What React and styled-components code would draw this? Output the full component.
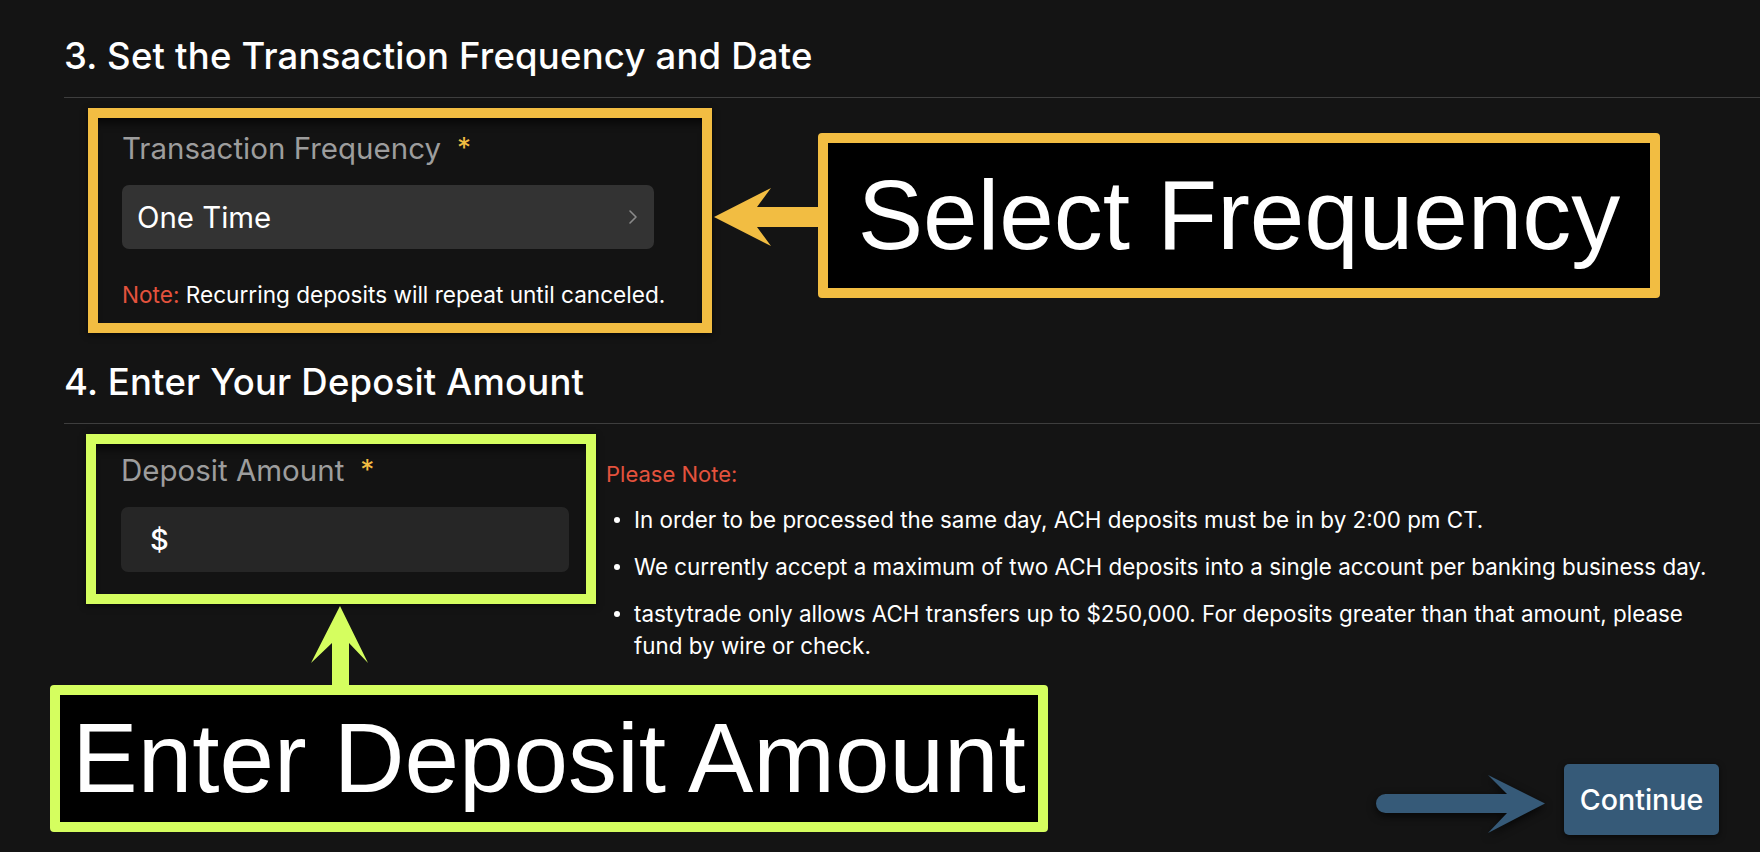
import React from "react";
import styled, { createGlobalStyle } from "styled-components";

const GlobalStyle = createGlobalStyle`
  html, body {
    margin: 0;
    padding: 0;
    background: #141414;
  }
  * {
    box-sizing: border-box;
  }
`;

const Page = styled.div`
  position: relative;
  width: 1760px;
  height: 852px;
  overflow: hidden;
  background: #141414;
  color: #ffffff;
  font-family: Inter, "Open Sans", sans-serif;
  padding: 34px 41px 0 64px;
`;

const Heading = styled.h2`
  margin: ${(p) => p.$top || 0}px 0 0 0;
  font-size: 36.5px;
  line-height: 44px;
  font-weight: 500;
  color: #ffffff;
  letter-spacing: 0.2px;
`;

const Divider = styled.hr`
  margin: 19px -41px 10px 0;
  border: 0;
  height: 1px;
  background: #3e3e3e;
`;

const Highlight = styled.div`
  margin-left: ${(p) => p.$left}px;
  width: ${(p) => p.$width}px;
  border: 10px solid ${(p) => p.$color};
  background: #131313;
  box-shadow: inset 0 10px 10px -6px rgba(0, 0, 0, 0.75),
    0 2px 6px rgba(0, 0, 0, 0.6);
  padding: ${(p) => p.$pad};
  flex-shrink: 0;
`;

const Label = styled.div`
  font-size: 29.5px;
  line-height: 36px;
  color: #9d9d9d;
  display: flex;
  align-items: flex-start;
  gap: 16px;
`;

const Star = styled.span`
  color: #f2bd42;
  font-size: 28px;
  line-height: 36px;
`;

const Select = styled.div`
  margin-top: 19px;
  width: 532px;
  height: 64px;
  border-radius: 7px;
  background: #333333;
  display: flex;
  align-items: center;
  justify-content: space-between;
  padding: 0 16px 0 15px;
  font-size: 29.4px;
  color: #ffffff;
`;

const AmountInput = styled.div`
  margin-top: 19px;
  width: 448px;
  height: 65px;
  border-radius: 7px;
  background: #262626;
  display: flex;
  align-items: center;
  padding-left: 29px;
  font-size: 29px;
  font-weight: 500;
  color: #ffffff;
`;

const Note = styled.div`
  margin-top: 31px;
  font-size: 22.6px;
  line-height: 30px;
  color: #ffffff;
  white-space: nowrap;
`;

const Red = styled.span`
  color: #e4523d;
`;

const AmountRow = styled.div`
  display: flex;
  align-items: flex-start;
`;

const Notes = styled.div`
  margin-left: 10px;
  padding-top: 25px;
  flex: 1;
`;

const NoteTitle = styled.div`
  font-size: 22px;
  line-height: 30px;
  color: #e4523d;
`;

const Bullets = styled.ul`
  list-style: none;
  margin: 0;
  padding: 0;
`;

const Bullet = styled.li`
  position: relative;
  margin-top: 15px;
  padding-left: 28px;
  font-size: 22.4px;
  line-height: 32px;
  color: #ffffff;

  &::before {
    content: "";
    position: absolute;
    left: 8px;
    top: 13px;
    width: 6px;
    height: 6px;
    border-radius: 50%;
    background: #ffffff;
  }
`;

const Footer = styled.div`
  margin-top: 102px;
  display: flex;
  justify-content: flex-end;
`;

const ContinueButton = styled.button`
  width: 155px;
  height: 71px;
  border: 0;
  border-radius: 5px;
  background: #365a78;
  color: #ffffff;
  font-family: Inter, "Open Sans", sans-serif;
  font-size: 28.6px;
  font-weight: 500;
  box-shadow: 0 2px 6px rgba(0, 0, 0, 0.6);
`;

const Callout = styled.div`
  position: absolute;
  left: ${(p) => p.$x}px;
  top: ${(p) => p.$y}px;
  width: ${(p) => p.$w}px;
  height: ${(p) => p.$h}px;
  border: 10px solid ${(p) => p.$color};
  border-radius: 4px;
  background: #000000;
  display: flex;
  align-items: center;
  justify-content: center;
  font-family: "Liberation Sans", Arial, sans-serif;
  font-size: 98px;
  color: #ffffff;
  white-space: nowrap;
`;

const ArrowSvg = styled.svg`
  position: absolute;
  left: ${(p) => p.$x}px;
  top: ${(p) => p.$y}px;
  overflow: visible;
`;

function Chevron() {
  return (
    <svg width="10" height="16" viewBox="0 0 10 16">
      <polyline
        points="2,2 8,8 2,14"
        fill="none"
        stroke="#8a8a8a"
        strokeWidth="1.6"
        strokeLinecap="round"
        strokeLinejoin="round"
      />
    </svg>
  );
}

export default function App() {
  return (
    <>
      <GlobalStyle />
      <Page>
        <Heading>3. Set the Transaction Frequency and Date</Heading>
        <Divider />
        <Highlight $left={24} $width={624} $color="#f2bd42" $pad="12px 0 13px 24px">
          <Label>
            Transaction Frequency <Star>*</Star>
          </Label>
          <Select>
            One Time
            <Chevron />
          </Select>
          <Note>
            <Red>Note:</Red> Recurring deposits will repeat until canceled.
          </Note>
        </Highlight>

        <Heading $top={27}>4. Enter Your Deposit Amount</Heading>
        <Divider />
        <AmountRow>
          <Highlight $left={22} $width={510} $color="#d5fe5f" $pad="8px 0 22px 25px">
            <Label>
              Deposit Amount <Star>*</Star>
            </Label>
            <AmountInput>$</AmountInput>
          </Highlight>
          <Notes>
            <NoteTitle>Please Note:</NoteTitle>
            <Bullets>
              <Bullet>
                In order to be processed the same day, ACH deposits must be in by 2:00 pm CT.
              </Bullet>
              <Bullet>
                We currently accept a maximum of two ACH deposits into a single account per banking business day.
              </Bullet>
              <Bullet>
                tastytrade only allows ACH transfers up to $250,000. For deposits greater than that amount, please fund by wire or check.
              </Bullet>
            </Bullets>
          </Notes>
        </AmountRow>

        <Footer>
          <ContinueButton>Continue</ContinueButton>
        </Footer>

        <ArrowSvg $x={712} $y={186} width="110" height="62" viewBox="0 0 110 62">
          <polygon
            points="2,31 59,2 45,21 110,21 110,41 45,41 59,60"
            fill="#f2bd42"
          />
        </ArrowSvg>
        <Callout $x={818} $y={133} $w={842} $h={165} $color="#f2bd42">
          Select Frequency
        </Callout>

        <ArrowSvg $x={308} $y={604} width="64" height="90" viewBox="0 0 64 90">
          <polygon
            points="32,2 60,59 41,39 41,88 24,88 24,39 3,59"
            fill="#d5fe5f"
          />
        </ArrowSvg>
        <Callout $x={50} $y={685} $w={998} $h={147} $color="#d5fe5f">
          Enter Deposit Amount
        </Callout>

        <ArrowSvg
          $x={1366}
          $y={770}
          width="184"
          height="68"
          viewBox="0 0 184 68"
          style={{ filter: "drop-shadow(0 3px 4px rgba(0,0,0,0.7))" }}
        >
          <path
            d="M19.5 24 L141 24 L122 5 L179 33.5 L122 63 L141 43 L19.5 43 A9.5 9.5 0 0 1 19.5 24 Z"
            fill="#365a78"
          />
        </ArrowSvg>
      </Page>
    </>
  );
}
